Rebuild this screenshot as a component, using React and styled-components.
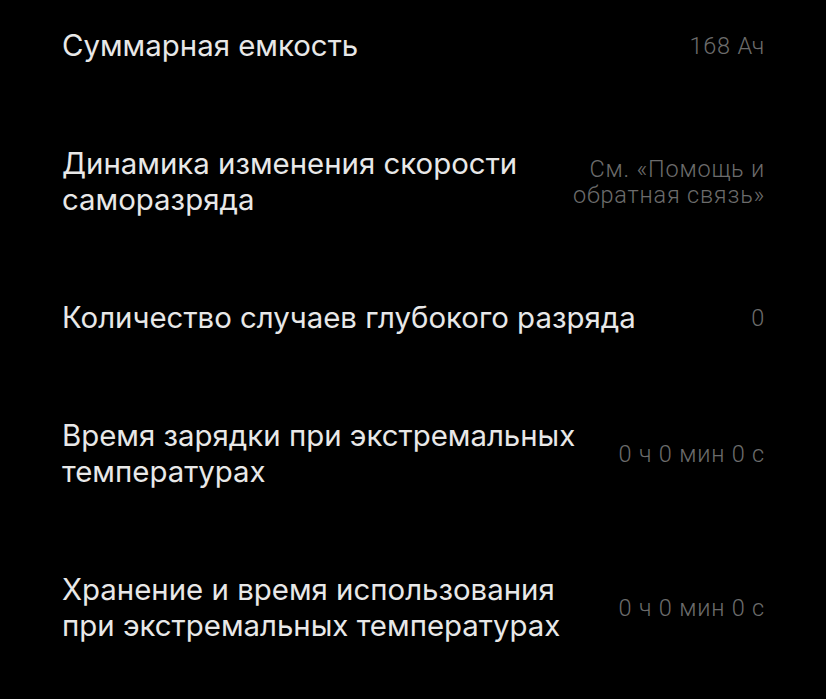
import styled, { createGlobalStyle } from "styled-components";

const GlobalStyle = createGlobalStyle`
  html, body {
    margin: 0;
    padding: 0;
    background: #000;
  }
  body {
    font-family: Inter, Roboto, "Noto Sans", sans-serif;
    -webkit-font-smoothing: antialiased;
  }
`;

const Page = styled.div`
  width: 826px;
  height: 699px;
  overflow: hidden;
  background: #000;
`;

const List = styled.div`
  display: flex;
  flex-direction: column;
  margin-top: -13px;
  padding: 0 61px 0 62px;
`;

const Row = styled.div`
  display: flex;
  align-items: center;
  justify-content: space-between;
  gap: 30px;
  padding: 41px 0;
`;

const Title = styled.div`
  flex: 1;
  min-width: 0;
  color: #e8e8e8;
  font-family: Inter, Roboto, sans-serif;
  font-size: 29.4px;
  line-height: 36px;
  font-weight: 400;
`;

const Value = styled.div`
  flex-shrink: 0;
  max-width: ${(p) => p.$max || "220px"};
  text-align: right;
  color: #6c6c6c;
  font-family: Roboto, "Noto Sans", sans-serif;
  font-size: 23.5px;
  line-height: 26px;
  letter-spacing: 0.8px;
  font-weight: 300;
`;

const rows = [
  { title: "Суммарная емкость", value: "168 Ач" },
  {
    title: "Динамика изменения скорости саморазряда",
    value: "См. «Помощь и обратная связь»",
    max: "200px",
  },
  { title: "Количество случаев глубокого разряда", value: "0" },
  { title: "Время зарядки при экстремальных температурах", value: "0 ч 0 мин 0 с" },
  {
    title: "Хранение и время использования при экстремальных температурах",
    value: "0 ч 0 мин 0 с",
  },
];

const App = () => {
  return (
    <Page>
      <GlobalStyle />
      <List>
        {rows.map((r) => (
          <Row key={r.title}>
            <Title>{r.title}</Title>
            <Value $max={r.max}>{r.value}</Value>
          </Row>
        ))}
      </List>
    </Page>
  );
};

export default App;
